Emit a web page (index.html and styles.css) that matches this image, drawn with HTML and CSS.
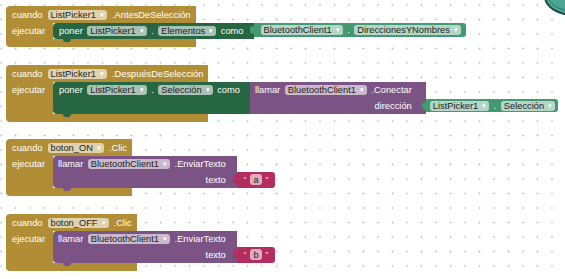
FILE: index.html
```html
<!DOCTYPE html>
<html lang="es">
<head>
  <meta charset="UTF-8">
  <meta name="viewport" content="width=device-width, initial-scale=1.0">
  <title>Bloques Bluetooth</title>
  <link rel="stylesheet" href="styles.css">
</head>
<body>
  <div class="workspace">

    <div class="event ev1">
      <div class="head">
        <span>cuando</span>
        <span class="field">ListPicker1<i>▾</i></span>
        <span>.AntesDeSelección</span>
      </div>
      <div class="body">
        <div class="arm">ejecutar</div>
        <div class="stmt">
          <div class="setter">
            <div class="row">
              <span>poner</span>
              <span class="field">ListPicker1<i>▾</i></span>
              <span>.</span>
              <span class="field">Elementos<i>▾</i></span>
              <span>como</span>
            </div>
          </div>
          <div class="value getter g1">
            <span class="field">BluetoothClient1<i>▾</i></span>
            <span>.</span>
            <span class="field">DireccionesYNombres<i>▾</i></span>
          </div>
        </div>
      </div>
      <div class="foot"></div>
    </div>

    <div class="event ev2">
      <div class="head">
        <span>cuando</span>
        <span class="field">ListPicker1<i>▾</i></span>
        <span>.DespuésDeSelección</span>
      </div>
      <div class="body">
        <div class="arm">ejecutar</div>
        <div class="stmt">
          <div class="setter">
            <div class="row">
              <span>poner</span>
              <span class="field">ListPicker1<i>▾</i></span>
              <span>.</span>
              <span class="field">Selección<i>▾</i></span>
              <span>como</span>
            </div>
          </div>
          <div class="callwrap">
            <div class="call inline">
              <div class="row">
                <span>llamar</span>
                <span class="field">BluetoothClient1<i>▾</i></span>
                <span>.Conectar</span>
              </div>
              <div class="row right">
                <span>dirección</span>
              </div>
            </div>
            <div class="sockets">
              <div class="socket">
                <div class="value getter g2">
                  <span class="field">ListPicker1<i>▾</i></span>
                  <span>.</span>
                  <span class="field">Selección<i>▾</i></span>
                </div>
              </div>
            </div>
          </div>
        </div>
      </div>
      <div class="foot"></div>
    </div>

    <div class="event ev3">
      <div class="head">
        <span>cuando</span>
        <span class="field">boton_ON<i>▾</i></span>
        <span>.Clic</span>
      </div>
      <div class="body">
        <div class="arm">ejecutar</div>
        <div class="stmt">
          <div class="callwrap">
            <div class="call">
              <div class="row">
                <span>llamar</span>
                <span class="field">BluetoothClient1<i>▾</i></span>
                <span>.EnviarTexto</span>
              </div>
              <div class="row right">
                <span>texto</span>
              </div>
            </div>
            <div class="sockets">
              <div class="socket">
                <div class="value text">
                  <span class="quote">“</span>
                  <span class="field tf">a</span>
                  <span class="quote">”</span>
                </div>
              </div>
            </div>
          </div>
        </div>
      </div>
      <div class="foot"></div>
    </div>

    <div class="event ev4">
      <div class="head">
        <span>cuando</span>
        <span class="field">boton_OFF<i>▾</i></span>
        <span>.Clic</span>
      </div>
      <div class="body">
        <div class="arm">ejecutar</div>
        <div class="stmt">
          <div class="callwrap">
            <div class="call">
              <div class="row">
                <span>llamar</span>
                <span class="field">BluetoothClient1<i>▾</i></span>
                <span>.EnviarTexto</span>
              </div>
              <div class="row right">
                <span>texto</span>
              </div>
            </div>
            <div class="sockets">
              <div class="socket">
                <div class="value text">
                  <span class="quote">“</span>
                  <span class="field tf">b</span>
                  <span class="quote">”</span>
                </div>
              </div>
            </div>
          </div>
        </div>
      </div>
      <div class="foot"></div>
    </div>

    <svg class="blob" width="22" height="20" viewBox="0 0 22 20">
      <ellipse cx="30" cy="-4" rx="28" ry="19" fill="#4ea593" stroke="#1d4a43" stroke-width="2"/>
      <ellipse cx="30" cy="-5" rx="25" ry="16" fill="none" stroke="#2f7466" stroke-width="1"/>
    </svg>

  </div>
</body>
</html>
```

FILE: styles.css
```css
* {
  box-sizing: border-box;
}
body {
  margin: 0;
  font-family: "Liberation Sans", Arial, sans-serif;
  font-size: 9.3px;
}
.workspace {
  position: relative;
  width: 565px;
  height: 279px;
  overflow: hidden;
  background-color: #fff;
  background-image: radial-gradient(circle, #c4c4c4 0.7px, transparent 1.3px);
  background-size: 14.5px 14.5px;
  background-position: -6.25px -2.25px;
}

/* bloques de evento */
.event {
  position: absolute;
  left: 6px;
  display: flex;
  flex-direction: column;
  color: #fff;
  white-space: nowrap;
}
.ev1 { top: 6px; }
.ev2 { top: 65px; }
.ev3 { top: 139px; }
.ev4 { top: 214px; }

.head {
  display: flex;
  align-items: center;
  gap: 5px;
  height: 17px;
  padding: 0 5px 0 6px;
  background: #b18e35;
  border-radius: 4px 0 0 0;
}
.body {
  display: flex;
  width: 0;
  min-width: 100%;
}
.arm {
  flex: none;
  width: 47px;
  padding: 2px 0 0 6px;
  line-height: 12px;
  background: #b18e35;
}
.foot {
  height: 8px;
  background: #b18e35;
  border-radius: 0 0 0 4px;
}
.stmt {
  display: flex;
  align-items: stretch;
}

.row {
  display: flex;
  align-items: center;
  gap: 4.5px;
  height: 16px;
}
.row.right {
  justify-content: flex-end;
  height: 15px;
}

/* poner ... como */
.setter {
  position: relative;
  min-height: 16px;
  padding: 0 10px 0 6px;
  background: #266643;
  border-radius: 4px 0 0 4px;
}
.setter::after,
.call::after {
  content: "";
  position: absolute;
  left: 10px;
  bottom: -3px;
  width: 8px;
  height: 3px;
  border-radius: 0 0 3px 3px;
  background: inherit;
}

/* llamar ... */
.callwrap {
  display: flex;
  align-items: flex-start;
}
.call {
  position: relative;
  padding: 0 11px 1px 5px;
  background: #7c5385;
  border-radius: 4px 0 0 4px;
}
.call.inline {
  padding-right: 14px;
  border-radius: 0;
}
.call.inline::after {
  display: none;
}
.sockets {
  padding-top: 16px;
}
.socket {
  display: flex;
  align-items: center;
  height: 15px;
}

/* bloques de valor */
.value {
  position: relative;
  display: flex;
  align-items: center;
  gap: 4.5px;
  border-radius: 0 3px 3px 0;
}
.value::before {
  content: "";
  position: absolute;
  left: -4px;
  top: 3px;
  width: 5px;
  height: 8px;
  border-radius: 3px 0 0 3px;
  background: inherit;
}
.getter {
  height: 14px;
  padding: 0 5px 0 7px;
  background: #439970;
}
.g2 {
  height: 13px;
  padding: 0 3px 0 4px;
}
.text {
  height: 16px;
  padding: 0 7px;
  gap: 4px;
  background: #b32d5e;
}
.quote {
  font-size: 8px;
}

/* campos desplegables */
.field {
  display: inline-flex;
  align-items: center;
  height: 10px;
  padding: 0 3px;
  border-radius: 3px;
  background: rgba(255, 255, 255, 0.6);
  color: #222;
}
.field i {
  font-style: normal;
  font-size: 7px;
  color: #fff;
  margin-left: 4px;
}
.tf {
  padding: 0 3px;
  height: 11px;
}

.blob {
  position: absolute;
  top: 0;
  right: 0;
}
```
